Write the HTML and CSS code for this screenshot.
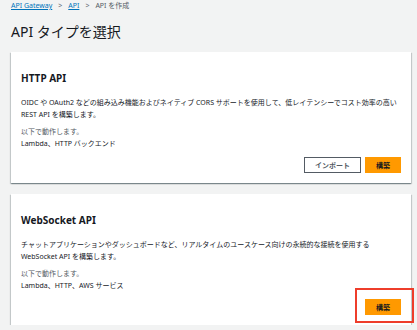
FILE: index.html
```html
<!DOCTYPE html>
<html lang="ja">
<head>
  <meta charset="UTF-8" />
  <meta name="viewport" content="width=device-width, initial-scale=1.0"/>
  <title>API タイプを選択</title>
  <link rel="stylesheet" href="styles.css">
</head>
<body>

  <nav class="breadcrumb">
    <a href="#">API Gateway</a>
    <span class="sep">&gt;</span>
    <a href="#">API</a>
    <span class="sep">&gt;</span>
    <span class="current">API を作成</span>
  </nav>

  <h1>API タイプを選択</h1>

  <div class="card">
    <h2>HTTP API</h2>
    <p class="desc">OIDC や OAuth2 などの組み込み機能およびネイティブ CORS サポートを使用して、低レイテンシーでコスト効率の高い REST API を構築します。</p>
    <div class="works">
      <p class="muted">以下で動作します。</p>
      <p>Lambda、HTTP バックエンド</p>
    </div>
    <div class="actions">
      <button class="btn">インポート</button>
      <button class="btn primary">構築</button>
    </div>
  </div>

  <div class="card">
    <h2>WebSocket API</h2>
    <p class="desc">チャットアプリケーションやダッシュボードなど、リアルタイムのユースケース向けの永続的な接続を使用する<br>WebSocket API を構築します。</p>
    <div class="works">
      <p class="muted">以下で動作します。</p>
      <p>Lambda、HTTP、AWS サービス</p>
    </div>
    <div class="actions">
      <button class="btn primary">構築</button>
    </div>
    <div class="highlight"></div>
  </div>

</body>
</html>
```

FILE: styles.css
```css
body {
  margin: 0;
  padding: 0 6px 0 11px;
  background: #f2f3f3;
  color: #16191f;
  font-family: "Noto Sans", "Noto Sans CJK JP", sans-serif;
}

p {
  margin: 0;
}

.breadcrumb {
  display: flex;
  align-items: center;
  gap: 6px;
  height: 12px;
  font-size: 7px;
  line-height: 12px;
}

.breadcrumb a {
  color: #0073bb;
}

.breadcrumb .sep {
  color: #687078;
}

.breadcrumb .current {
  color: #545b64;
}

h1 {
  margin: 10px 0 0;
  font-size: 14px;
  font-weight: normal;
  line-height: 20px;
}

.card {
  position: relative;
  margin-top: 10px;
  padding: 19px 10px 10px;
  background: #fff;
  box-shadow: 0 1px 1px 0 rgba(0,28,36,0.3), 1px 1px 1px 0 rgba(0,28,36,0.15), -1px 1px 1px 0 rgba(0,28,36,0.15);
}

.card + .card {
  margin-top: 11px;
}

h2 {
  margin: 0;
  font-size: 10px;
  font-weight: bold;
  line-height: 14px;
}

.desc {
  margin-top: 12px;
  font-size: 7px;
  line-height: 12px;
}

.works {
  margin-top: 5px;
  font-size: 7px;
  line-height: 12px;
}

.muted {
  color: #545b64;
}

.actions {
  display: flex;
  justify-content: flex-end;
  gap: 4px;
  margin-top: 7px;
}

.btn {
  height: 16px;
  padding: 0 10px;
  border: 1px solid #545b64;
  background: #fff;
  color: #545b64;
  font-family: inherit;
  font-size: 7px;
  font-weight: bold;
  cursor: pointer;
}

.btn.primary {
  border-color: #ff9900;
  background: #ff9900;
  color: #16191f;
}

.highlight {
  position: absolute;
  left: 344px;
  right: -3px;
  bottom: 2px;
  height: 35px;
  border: 2px solid #ee3d2b;
  box-sizing: border-box;
}
```
